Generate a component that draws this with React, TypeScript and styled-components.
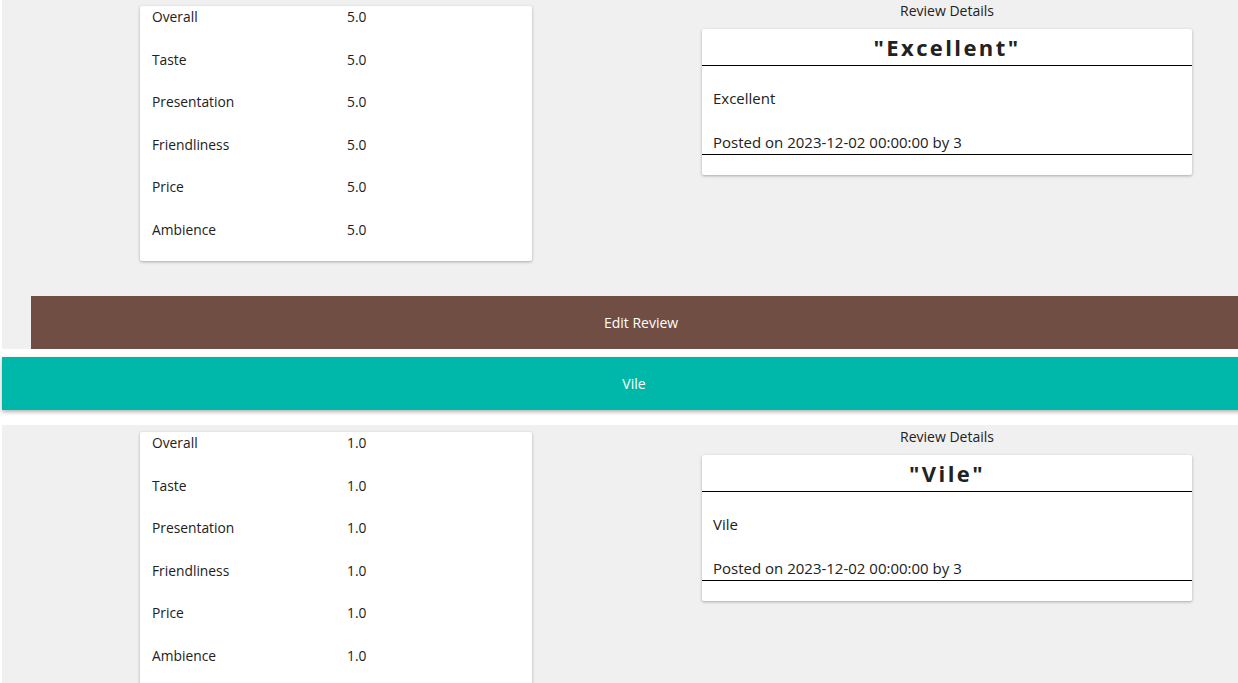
import React from "react";
import styled, { createGlobalStyle } from "styled-components";

const GlobalStyle = createGlobalStyle`
  html, body {
    margin: 0;
    padding: 0;
    background: #ffffff;
    overflow: hidden;
  }
  body {
    font-family: "Open Sans", "Noto Sans", Arial, sans-serif;
    color: #212121;
    font-size: 14px;
  }
`;

const Page = styled.div`
  width: 1264px;
  margin-left: 2px;
  display: flex;
  flex-direction: column;
`;

const Section = styled.section<{ $first?: boolean }>`
  background: #f0f0f0;
  margin-top: ${(p) => (p.$first ? "-1px" : "0")};
  display: flex;
  flex-direction: column;
  padding-bottom: ${(p) => (p.$first ? "0" : "40px")};
`;

const ContentRow = styled.div`
  display: flex;
  align-items: flex-start;
  padding-left: 138px;
  gap: 170px;
`;

const RatingsCard = styled.div`
  width: 392px;
  margin-top: 7px;
  background: #ffffff;
  border-radius: 2px;
  box-shadow: 0 1px 3px rgba(0, 0, 0, 0.3);
  display: flex;
  flex-direction: column;
`;

const RatingRow = styled.div`
  height: 42.5px;
  box-sizing: border-box;
  padding: 1px 12px 0;
  display: flex;
  align-items: flex-start;
  line-height: 20px;
`;

const RatingLabel = styled.span`
  width: 195px;
  font-size: 13.8px;
  color: #212121;
`;

const RatingValue = styled.span`
  font-size: 13.8px;
  color: #212121;
`;

const DetailsColumn = styled.div`
  width: 490px;
  padding-top: 2px;
  display: flex;
  flex-direction: column;
`;

const DetailsHeading = styled.div`
  text-align: center;
  line-height: 20px;
  font-size: 14px;
  color: #212121;
`;

const ReviewCard = styled.div`
  margin-top: 8px;
  background: #ffffff;
  border-radius: 2px;
  box-shadow: 0 1px 3px rgba(0, 0, 0, 0.3);
  display: flex;
  flex-direction: column;
`;

const ReviewTitle = styled.div`
  height: 37px;
  box-sizing: border-box;
  border-bottom: 1px solid #000000;
  display: flex;
  align-items: center;
  justify-content: center;
  font-size: 22px;
  font-weight: 700;
  letter-spacing: 2.4px;
  color: #222222;
`;

const ReviewBody = styled.div`
  padding: 22px 11px 2px;
  border-bottom: 1px solid #000000;
  display: flex;
  flex-direction: column;
  gap: 24px;
`;

const ReviewText = styled.p`
  margin: 0;
  line-height: 20px;
  font-size: 15px;
  color: #212121;
`;

const ReviewFooter = styled.div`
  height: 20px;
`;

const ActionBar = styled.button`
  margin: 35px 15px 0 29px;
  height: 53px;
  border: none;
  background: #714e43;
  color: #ffffff;
  font-family: "Open Sans", "Noto Sans", Arial, sans-serif;
  font-size: 14px;
  cursor: pointer;
`;

const ReviewBanner = styled.div`
  margin: 8px 0 15px;
  height: 53px;
  background: #00b8a9;
  color: #ffffff;
  display: flex;
  align-items: center;
  justify-content: center;
  font-size: 14px;
  box-shadow: 0 2px 4px rgba(0, 0, 0, 0.3);
`;

type Review = {
  title: string;
  score: string;
  showEdit: boolean;
};

const categories = ["Overall", "Taste", "Presentation", "Friendliness", "Price", "Ambience"];

const ReviewSection: React.FC<{ review: Review; first?: boolean }> = ({ review, first }) => (
  <Section $first={first}>
    <ContentRow>
      <RatingsCard>
        {categories.map((c) => (
          <RatingRow key={c}>
            <RatingLabel>{c}</RatingLabel>
            <RatingValue>{review.score}</RatingValue>
          </RatingRow>
        ))}
      </RatingsCard>
      <DetailsColumn>
        <DetailsHeading>Review Details</DetailsHeading>
        <ReviewCard>
          <ReviewTitle>"{review.title}"</ReviewTitle>
          <ReviewBody>
            <ReviewText>{review.title}</ReviewText>
            <ReviewText>Posted on 2023-12-02 00:00:00 by 3</ReviewText>
          </ReviewBody>
          <ReviewFooter />
        </ReviewCard>
      </DetailsColumn>
    </ContentRow>
    {review.showEdit && <ActionBar>Edit Review</ActionBar>}
  </Section>
);

export default function App() {
  return (
    <>
      <GlobalStyle />
      <Page>
        <ReviewSection first review={{ title: "Excellent", score: "5.0", showEdit: true }} />
        <ReviewBanner>Vile</ReviewBanner>
        <ReviewSection review={{ title: "Vile", score: "1.0", showEdit: false }} />
      </Page>
    </>
  );
}
